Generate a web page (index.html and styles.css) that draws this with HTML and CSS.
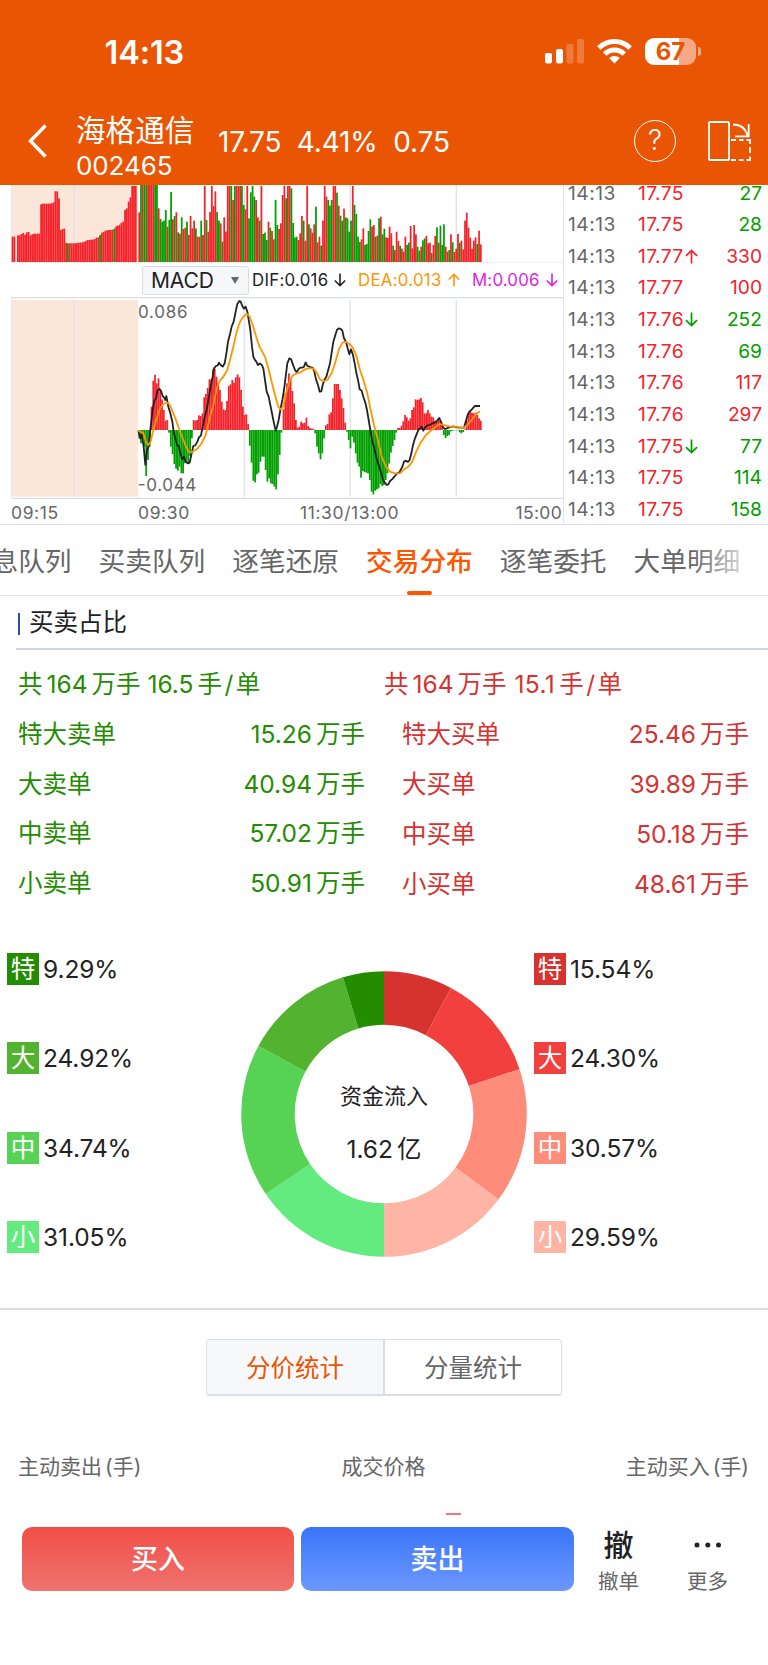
FILE: index.html
```html
<!DOCTYPE html>
<html lang="zh-CN">
<head>
<meta charset="utf-8">
<title>海格通信 002465</title>
<link rel="stylesheet" href="styles.css">
</head>
<body>
<header class="header">
  <div class="status">
    <span class="clock">14:13</span>
    <div class="status-icons">
      <svg class="signal" width="40" height="26" viewBox="0 0 40 26" fill="#fff">
        <rect x="0" y="15" width="7" height="10.5" rx="2"/><rect x="11" y="11" width="7" height="14.5" rx="2"/>
        <rect x="21.5" y="6" width="7" height="19.5" rx="2" opacity=".22"/><rect x="32" y="1" width="7" height="24.5" rx="2" opacity=".22"/>
      </svg>
      <svg class="wifi" width="35" height="26" viewBox="0 0 35 26" fill="none" stroke="#fff" stroke-width="5">
        <path d="M1.9 10a22.2 22.2 0 0 1 31.2 0"/><path d="M7.6 16a14 14 0 0 1 19.8 0"/><path d="M17.5 25.5l-5.4-5.4a7.7 7.7 0 0 1 10.8 0z" fill="#fff" stroke="none"/>
      </svg>
      <div class="battery"><span class="battery-body">67</span><i class="battery-cap"></i></div>
    </div>
  </div>
  <div class="titlebar">
    <svg class="back" width="20" height="34" viewBox="0 0 20 34" fill="none" stroke="#fff" stroke-width="3.4"><path d="M17.500 1.500L2.500 17L17.500 32.500"/></svg>
    <div class="stock"><div class="stock-name">海格通信</div><div class="stock-code">002465</div></div>
    <div class="quote"><span>17.75</span><span>4.41%</span><span>0.75</span></div>
    <div class="help">?</div>
    <svg class="rotate" width="46" height="42" viewBox="0 0 46 42" fill="none" stroke="#fff" stroke-width="1.8">
      <rect x="2" y="2" width="20" height="38" rx="1"/>
      <path d="M26 4.500c7.500 0 12.500 3 14.500 11.500M41.700 4v12.300H28"/>
      <path d="M24 20h5m3 0h4.500m3 0h3.500v4M24 40h5m3 0h4.500m3 0h3.500v-3.500M43 27v6"/>
    </svg>
  </div>
</header>

<section class="market">
  <div class="charts">
    <svg class="volume" width="563" height="78" viewBox="0 15 1689 234" id="volume">
      <rect x="35" y="15" width="379" height="232" fill="#fbe6da"/>
      <path d="M223 15v232M733 15v232M1051 15v232M1369 15v232" stroke="#dfe4ec" stroke-width="4.500"/>
      <path d="M34 15v232" stroke="#e2e4e9" stroke-width="3"/>
      <path d="M34 248.500H1692" stroke="#e6e8ec" stroke-width="4"/>
    </svg>
    <div class="indicator">
      <div class="picker"><span>MACD</span><i></i></div>
      <div class="readout dif">DIF:0.016<svg class="arrow"><use href="#down"/></svg></div>
      <div class="readout dea">DEA:0.013<svg class="arrow"><use href="#up"/></svg></div>
      <div class="readout m">M:0.006<svg class="arrow"><use href="#down"/></svg></div>
    </div>
    <svg class="macd" width="563" height="202" viewBox="0 351 1689 606" id="macd">
      <rect x="35" y="360" width="379" height="590" fill="#fbe6da"/>
      <path d="M223 360v590M733 360v590M1051 360v590M1369 360v590" stroke="#dfe4ec" stroke-width="4.500"/>
      <path d="M34 351v600" stroke="#e2e4e9" stroke-width="3"/>
      <path d="M34 353H1692M34 955H1692" stroke="#d9dee5" stroke-width="4"/>
      <g class="scale"><text x="414" y="413" textLength="149">0.086</text><text x="413" y="932" textLength="176">-0.044</text></g>
    </svg>
    <div class="times"><span class="t1">09:15</span><span class="t2">09:30</span><span>11:30/13:00</span><span class="t4">15:00</span></div>
  </div>
  <div class="ticks" id="ticks"></div>
</section>

<nav class="tabs">
  <span class="tab first">息队列</span><span class="tab">买卖队列</span><span class="tab">逐笔还原</span><span class="tab active">交易分布</span><span class="tab">逐笔委托</span><span class="tab">大单明细</span>
</nav>

<section class="ratio">
  <h2 class="section-title"><span>买卖占比</span></h2>
  <div class="orders">
    <div class="sell">
      <div class="total">共<b>164</b>万手<b class="avg">16.5</b>手<b class="per">/</b>单</div>
      <div class="line"><span>特大卖单</span><span><b>15.26</b>万手</span></div>
      <div class="line"><span>大卖单</span><span><b>40.94</b>万手</span></div>
      <div class="line"><span>中卖单</span><span><b>57.02</b>万手</span></div>
      <div class="line"><span>小卖单</span><span><b>50.91</b>万手</span></div>
    </div>
    <div class="buy">
      <div class="total">共<b>164</b>万手<b class="avg">15.1</b>手<b class="per">/</b>单</div>
      <div class="line"><span>特大买单</span><span><b>25.46</b>万手</span></div>
      <div class="line"><span>大买单</span><span><b>39.89</b>万手</span></div>
      <div class="line"><span>中买单</span><span><b>50.18</b>万手</span></div>
      <div class="line"><span>小买单</span><span><b>48.61</b>万手</span></div>
    </div>
  </div>
  <div class="flow">
    <div class="legend">
      <div><i class="g1">特</i>9.29%</div><div><i class="g2">大</i>24.92%</div><div><i class="g3">中</i>34.74%</div><div><i class="g4">小</i>31.05%</div>
    </div>
    <div class="donut">
      <svg width="286" height="286" viewBox="-143 -143 286 286" id="ring"></svg>
      <div class="donut-text"><span class="cap">资金流入</span><span><b>1.62</b>亿</span></div>
    </div>
    <div class="legend right">
      <div><i class="r1">特</i>15.54%</div><div><i class="r2">大</i>24.30%</div><div><i class="r3">中</i>30.57%</div><div><i class="r4">小</i>29.59%</div>
    </div>
  </div>
</section>

<section class="stats">
  <div class="segment"><span class="on">分价统计</span><span>分量统计</span></div>
  <div class="heads"><span>主动卖出<b>(</b>手<b>)</b></span><span>成交价格</span><span>主动买入<b>(</b>手<b>)</b></span></div>
  <div class="price-bar"></div>
</section>

<footer class="actions">
  <div class="btn btn-buy">买入</div>
  <div class="btn btn-sell">卖出</div>
  <div class="action"><span class="glyph">撤</span><span>撤单</span></div>
  <div class="action more"><svg class="glyph" width="30" height="36" viewBox="0 0 30 36" fill="#222"><circle cx="4" cy="18" r="2.500"/><circle cx="14.800" cy="18" r="2.500"/><circle cx="25.500" cy="18" r="2.500"/></svg><span>更多</span></div>
</footer>

<svg class="defs" width="0" height="0">
  <symbol id="down" viewBox="0 0 12 14"><path d="M6 .5v12M.8 7.500L6 12.700l5.200-5.200" fill="none" stroke="currentColor" stroke-width="1.600"/></symbol>
  <symbol id="up" viewBox="0 0 12 14"><path d="M6 13.500v-12M.8 6.500L6 1.300l5.200 5.200" fill="none" stroke="currentColor" stroke-width="1.600"/></symbol>
</svg>
<script src="app.js"></script>
</body>
</html>
```

FILE: styles.css
```css
* { box-sizing: border-box; }
body { margin: 0; width: 768px; height: 1665px; overflow: hidden; background: #fff; color: #222; font-family: Inter, "Noto Sans CJK SC", sans-serif; display: flex; flex-direction: column; }
b, i { font-weight: inherit; font-style: normal; }
.defs { position: absolute; }

.header { height: 185px; flex: none; background: #ea5504; color: #fff; }
.status { height: 103px; padding: 37px 67px 0 104.500px; display: flex; justify-content: space-between; }
.clock { font-size: 32.500px; line-height: 32px; font-weight: 600; letter-spacing: -.1px; }
.status-icons { display: flex; align-items: flex-start; }
.signal { margin: 1px 12px 0 0; }
.wifi { margin: 1px 13px 0 0; }
.battery { display: flex; align-items: center; margin-top: 1px; }
.battery-body { width: 51px; height: 27px; border-radius: 9px; background: linear-gradient(90deg, #fff 34px, #f6a984 34px); color: #ea5504; font-size: 24px; font-weight: 700; line-height: 28px; text-align: center; }
.battery-cap { width: 3px; height: 9px; margin-left: 2px; border-radius: 0 4px 4px 0; background: #f6a984; }
.titlebar { height: 82px; display: flex; padding: 0 14px 0 28px; }
.back { margin: 21px 0 0; flex: none; }
.stock { width: 142px; margin-left: 28px; flex: none; }
.stock-name { font-size: 29.6px; line-height: 36px; margin-top: 9px; }
.stock-code { font-size: 26px; line-height: 30px; margin-top: 3px; letter-spacing: -.1px; }
.quote { width: 416px; flex: none; display: flex; gap: 15.500px; font-size: 28px; line-height: 34px; padding-top: 22px; letter-spacing: -.15px; }
.help { flex: none; width: 42px; height: 42px; margin: 17px 0 0 0; border: 1.7px solid #fff; border-radius: 50%; font-size: 28px; line-height: 38px; text-align: center; font-weight: 300; }
.rotate { flex: none; margin: 17px 0 0 31px; }

.market { height: 340px; flex: none; display: flex; border-bottom: 1px solid #dfe1e8; overflow: hidden; }
.charts { width: 564px; border-right: 1.500px solid #dfe3ea; flex: none; }
.volume, .macd { display: block; }
.scale { font-size: 51px; fill: #666; }
.indicator { height: 34px; padding-left: 142px; display: flex; align-items: center; font-size: 17px; }
.picker { flex: none; width: 107px; height: 29px; border: 1px solid #d8dde4; border-radius: 3px; background: #f6f7f9; display: flex; align-items: center; justify-content: space-between; padding: 0 9px 0 8px; font-size: 21px; letter-spacing: -.1px; }
.picker i { border: 4.500px solid transparent; border-top: 7px solid #666; border-bottom: 0; }
.readout { flex: none; display: flex; align-items: center; white-space: nowrap; font-size: 16.800px; letter-spacing: .3px; }
.readout .arrow { margin-left: 6px; }
.arrow { width: 12px; height: 14px; flex: none; }
.dif { width: 106px; margin-left: 3px; }
.dea { width: 114px; color: #ff9500; }
.m { color: #df1bdf; letter-spacing: .2px; }
.times { height: 27px; display: flex; align-items: center; font-size: 17.500px; line-height: 28px; color: #666; padding: 0 1px 0 11px; letter-spacing: .6px; }
.t1 { width: 127px; }
.t2 { width: 162px; }
.t4 { margin-left: auto; letter-spacing: .3px; }

.ticks { flex: 1; padding: 0 6px 0 4px; margin-top: -7.500px; font-size: 19.200px; }
.tick { display: flex; height: 31.65px; line-height: 31.65px; align-items: center; }
.tick .time { width: 70px; color: #666; letter-spacing: .5px; }
.tick .price { width: 46px; color: #f5222a; letter-spacing: .4px; }
.tick .arrow { margin-left: 1px; width: 13px; height: 15px; color: #00a000; }
.tick .arrow.up { color: #f5222a; }
.tick .qty { margin-left: auto; color: #00a000; }
.tick .qty.red { color: #f5222a; }

.tabs { height: 71px; flex: none; display: flex; gap: 27px; border-bottom: 1px solid #e6e7e9; font-size: 26.700px; line-height: 73px; color: #666; white-space: nowrap; position: relative; overflow: hidden; }
.tabs::after { content: ""; position: absolute; right: 0; top: 0; width: 76px; height: 70px; background: linear-gradient(90deg, rgba(255,255,255,0), #fff 90%); }
.tab { flex: none; position: relative; }
.first { margin-left: -8.500px; }
.active { color: #ff5500; font-weight: 500; }
.active::after { content: ""; position: absolute; left: 41px; bottom: 0; width: 25px; height: 4px; border-radius: 2px; background: #ff5500; }

.ratio { height: 714px; flex: none; border-bottom: 2px solid #d9dbe1; font-size: 24.500px; overflow: hidden; }
.section-title { height: 54px; margin: 0 0 0 16px; padding: 17px 0 0 2px; font-size: 24.500px; font-weight: 400; border-bottom: 2px solid #d0d7dc; }
.section-title span { display: block; height: 22px; line-height: 18px; border-left: 2px solid #2a4f98; padding-left: 9px; }
.orders { display: flex; height: 264px; padding-left: 18px; }
.sell { width: 347px; color: #238c00; }
.buy { width: 384px; padding-left: 19px; color: #d63230; }
.total { height: 59px; line-height: 69px; white-space: nowrap; }
.total b { margin: 0 4px; }
.total .avg { margin-left: 7px; }
.total .per { margin: 0 2.500px; }
.buy .total .avg { letter-spacing: .4px; margin-left: 8px; }
.line { display: flex; justify-content: space-between; height: 49.600px; line-height: 50px; }
.line b { margin-right: 4px; }
.buy .line { height: 50px; line-height: 51px; padding-left: 18px; }
.flow { height: 380px; display: flex; padding: 39px 0 0 7px; }
.legend { width: 234px; display: flex; flex-direction: column; gap: 57.300px; }
.legend div { height: 32px; display: flex; align-items: center; gap: 4px; letter-spacing: -.1px; }
.legend i { width: 32px; height: 32px; line-height: 32px; text-align: center; color: #fff; letter-spacing: 0; }
.right { margin-left: 7px; }
.g1 { background: #238c00; } .g2 { background: #53b22f; } .g3 { background: #56d355; } .g4 { background: #64eb80; }
.r1 { background: #d63230; } .r2 { background: #f2403e; } .r3 { background: #fd8c7b; } .r4 { background: #ffb5a5; }
.donut { flex: none; width: 286px; height: 286px; margin-top: 18px; display: grid; }
.donut > * { grid-area: 1 / 1; }
.donut-text { display: flex; flex-direction: column; align-items: center; gap: 20px; padding-top: 109px; line-height: 33px; }
.donut-text .cap { font-size: 22px; }
.donut-text b { margin-right: 4px; }

.stats { height: 217px; flex: none; padding-top: 29px; }
.segment { width: 356px; height: 57px; margin: 0 auto; border: 1.500px solid #dadde3; border-bottom-width: 2px; border-radius: 4px; display: flex; font-size: 24.500px; line-height: 57px; text-align: center; color: #666; overflow: hidden; }
.segment span { flex: 1; }
.segment .on { background: #f7f8fa; color: #ea5504; border-right: 2px solid #d9dce3; }
.heads { display: flex; justify-content: space-between; padding: 0 19px 0 18px; margin-top: 55px; font-size: 21px; line-height: 31px; height: 32px; color: #666; }
.heads b { margin: 0 0 0 3px; }
.heads b:last-child { margin: 0; }
.price-bar { width: 15px; height: 2px; margin: 30px 0 0 446px; background: #f4727a; }

.actions { display: flex; padding-left: 22px; }
.btn { width: 272px; height: 64px; border-radius: 10px; margin-right: 7px; color: #fff; font-size: 27px; font-weight: 500; line-height: 66px; text-align: center; }
.btn-buy { background: linear-gradient(#f24e48, #ee736e); }
.btn-sell { width: 273px; background: linear-gradient(#3975f8, #6c98ff); }
.action { width: 42px; margin-left: 16.500px; display: flex; flex-direction: column; align-items: center; font-size: 20.500px; line-height: 31px; color: #666; }
.action .glyph { font-size: 30px; line-height: 36px; font-weight: 500; color: #222; margin-top: 0; margin-bottom: 3px; }
.action.more { margin-left: 47px; }
```

FILE: app.js
```js
const RED = '#f5222a', GREEN = '#00a000', NS = 'http://www.w3.org/2000/svg';

function draw(parent, name, attrs) {
  const el = document.createElementNS(NS, name);
  for (const key in attrs) el.setAttribute(key, attrs[key]);
  parent.appendChild(el);
}

// Volume bars: [start, end, tops]; a negative top is a falling (green) bar.
const volume = [
  [35, 410, '170 170 248 166 166 162 159 164 157 156 166 163 161 161 161 161 73 71 71 71 71 71 70 67 34 34 55 150 147 146 188 -190 190 190 190 190 189 188 188 187 186 183 180 180 179 179 177 173 172 -165 158 156 152 151 150 150 149 -146 139 137 134 128 125 90 85 65 52 18 18 18'],
  [415, 840, '97 -15 15 -15 -15 15 15 15 15 -15 -15 85 -117 -125 -122 -90 140 -120 -36 118 -108 97 -157 161 -112 147 143 -125 165 108 145 122 -145 170 170 -122 165 18 -120 155 96 18 78 34 -96 -122 130 -185 112 155 18 18 -18 60 -18 18 18 18 -18 -75 88 18 -115 -37 -18 -50 60 112 -122 18 -162 -158 -180 125 -143 153 178 -60 -135 147'],
  [840, 1445, '130 45 18 -55 18 18 -25 -129 -172 -170 180 160 108 -122 182 18 -133 145 158 133 -80 187 170 -197 122 18 50 -60 -77 -60 18 18 -38 77 -107 -122 86 -112 -115 -155 -122 18 -75 -102 -170 -186 178 145 -195 -192 -153 -118 140 135 -170 167 -115 110 -163 -146 172 174 140 160 -197 210 155 183 -197 206 215 170 -195 -188 138 205 135 163 -200 -212 200 -181 -175 168 190 188 -219 195 168 -142 188 -137 -195 -133 200 215 -210 163 -187 216 206 162 -188 182 208 122 98 143 173 206 182 172 -192 152 193']
];

// MACD histogram ends, measured around the zero line at 750.
const histogram = [
  [415, 847, '775 790 780 800 888 840 800 680 602 584 610 595 632 658 690 722 720 758 800 822 852 866 872 860 880 880 850 843 848 828 775 720 722 720 706 708 700 652 642 624 598 598 568 566 590 610 630 665 688 690 663 618 613 600 608 592 583 592 630 680 705 703 732 797 848 902 907 883 878 845 830 830 870 905 895 910 912 920 928 883 825 758'],
  [848, 1445, '688 640 610 580 597 633 670 720 743 740 725 730 728 713 738 744 746 746 760 800 820 838 820 775 736 732 703 697 655 612 612 612 630 655 684 728 755 780 805 770 788 820 848 860 893 873 876 878 880 900 935 943 932 928 925 912 918 915 900 880 850 818 798 780 758 744 744 737 724 705 712 722 715 690 682 658 660 658 654 667 700 700 690 700 710 712 722 722 715 722 738 765 774 768 765 754 752 751 751 751 757 760 756 748 722 700 692 698 700 698 705 715 722']
];

const dif = '415,752 421,775 425,762 431,800 436,855 441,810 446,800 452,740 458,690 463,662 468,655 472,632 478,627 483,632 488,648 492,652 496,660 499,648 505,680 511,700 517,725 521,755 527,780 532,795 537,800 541,820 547,838 552,830 556,843 563,850 569,848 575,820 580,798 586,796 592,785 597,772 603,766 608,740 614,712 620,690 626,655 632,620 638,590 642,565 648,558 653,556 657,548 662,555 668,560 674,550 680,515 684,485 690,462 695,440 701,425 707,395 712,372 718,363 722,365 727,378 732,386 737,380 742,395 747,425 751,450 756,500 760,530 765,540 769,545 774,555 780,550 786,556 790,565 795,600 800,635 806,650 811,675 817,705 822,730 827,752 831,740 836,720 841,690 847,660 852,630 857,590 862,550 868,535 873,537 880,557 885,570 890,577 896,567 901,563 907,563 912,560 917,547 922,558 928,560 933,562 938,563 943,575 948,598 954,615 959,635 964,634 968,615 973,600 979,590 984,572 990,550 995,518 1000,485 1006,465 1011,449 1017,445 1022,447 1027,452 1032,475 1038,485 1043,505 1048,523 1053,508 1059,525 1064,550 1069,578 1075,605 1079,628 1085,632 1090,650 1096,668 1101,690 1106,720 1111,750 1117,785 1123,805 1128,828 1133,845 1139,865 1144,880 1149,900 1155,908 1160,915 1165,913 1170,903 1176,898 1181,892 1186,887 1191,880 1197,878 1202,870 1207,860 1212,845 1218,842 1224,846 1229,840 1234,820 1239,795 1245,775 1251,760 1256,748 1261,745 1265,740 1270,752 1275,743 1281,737 1287,735 1293,733 1300,728 1307,727 1313,720 1318,714 1324,728 1329,742 1335,747 1341,745 1347,742 1360,739 1375,743 1392,743 1397,725 1403,705 1408,695 1414,690 1420,683 1425,678 1440,678';
const dea = '415,752 430,760 438,785 445,795 452,785 460,750 470,715 480,685 490,672 500,668 508,672 520,700 530,725 540,755 550,780 558,800 566,815 575,817 590,808 605,790 617,765 628,720 640,675 650,625 660,602 670,590 682,570 690,540 700,500 710,455 720,425 730,410 740,402 748,408 758,435 770,475 780,503 795,530 805,565 815,605 825,645 835,680 842,688 850,680 858,640 870,600 878,587 890,580 902,577 915,568 925,565 940,565 950,578 960,598 970,603 982,600 995,580 1005,550 1018,505 1028,487 1038,485 1048,492 1058,502 1070,530 1080,570 1092,605 1102,640 1112,690 1122,735 1135,785 1145,830 1158,860 1170,875 1185,880 1200,880 1212,868 1225,860 1237,845 1250,812 1262,788 1278,765 1295,750 1310,738 1320,732 1335,736 1350,740 1370,740 1385,744 1400,738 1415,720 1428,702 1440,694';

function eachBar(groups, paint) {
  for (const [start, end, list] of groups) {
    const values = list.split(' ').map(Number), step = (end - start) / values.length;
    values.forEach((v, i) => paint(start + i * step, step, v));
  }
}

const vol = document.getElementById('volume');
eachBar(volume, (x, w, v) => draw(vol, 'rect', { x, y: Math.abs(v), width: w, height: Math.max(0, 246 - Math.abs(v)), fill: v < 0 ? GREEN : RED }));

const macd = document.getElementById('macd');
eachBar(histogram, (x, w, v) => draw(macd, 'rect', { x, y: Math.min(v, 750), width: w, height: Math.abs(v - 750), fill: v > 750 ? GREEN : RED }));
for (const [points, stroke] of [[dif, '#222'], [dea, '#ff9500']])
  draw(macd, 'polyline', { points, stroke, fill: 'none', 'stroke-width': 5.4, 'stroke-linejoin': 'round' });

const ticks = [['17.75', '', 27], ['17.75', '', 28], ['17.77', 'up', 330, 1], ['17.77', '', 100, 1], ['17.76', 'down', 252], ['17.76', '', 69], ['17.76', '', 117, 1], ['17.76', '', 297, 1], ['17.75', 'down', 77], ['17.75', '', 114], ['17.75', '', 158]];
document.getElementById('ticks').innerHTML = ticks.map(([price, dir, qty, red]) =>
  `<div class="tick"><span class="time">14:13</span><span class="price">${price}</span>${dir ? `<svg class="arrow ${dir}"><use href="#${dir}"/></svg>` : ''}<span class="qty ${red ? 'red' : ''}">${qty}</span></div>`).join('');

// Each side takes half of the ring, so both halves together make 200 units.
const ring = document.getElementById('ring'), OUTER = 142.8, INNER = 89.3;
const point = (units, r) => {
  const a = units / 100 * Math.PI;
  return `${(r * Math.sin(a)).toFixed(2)} ${(-r * Math.cos(a)).toFixed(2)}`;
};
let from = 0;
for (const [size, fill] of [[15.54, '#d63230'], [24.3, '#f2403e'], [30.57, '#fd8c7b'], [29.59, '#ffb5a5'], [31.05, '#64eb80'], [34.74, '#56d355'], [24.92, '#53b22f'], [9.29, '#238c00']]) {
  const to = from + size;
  draw(ring, 'path', { fill, d: `M${point(from, OUTER)}A${OUTER} ${OUTER} 0 0 1 ${point(to, OUTER)}L${point(to, INNER)}A${INNER} ${INNER} 0 0 0 ${point(from, INNER)}Z` });
  from = to;
}
```
